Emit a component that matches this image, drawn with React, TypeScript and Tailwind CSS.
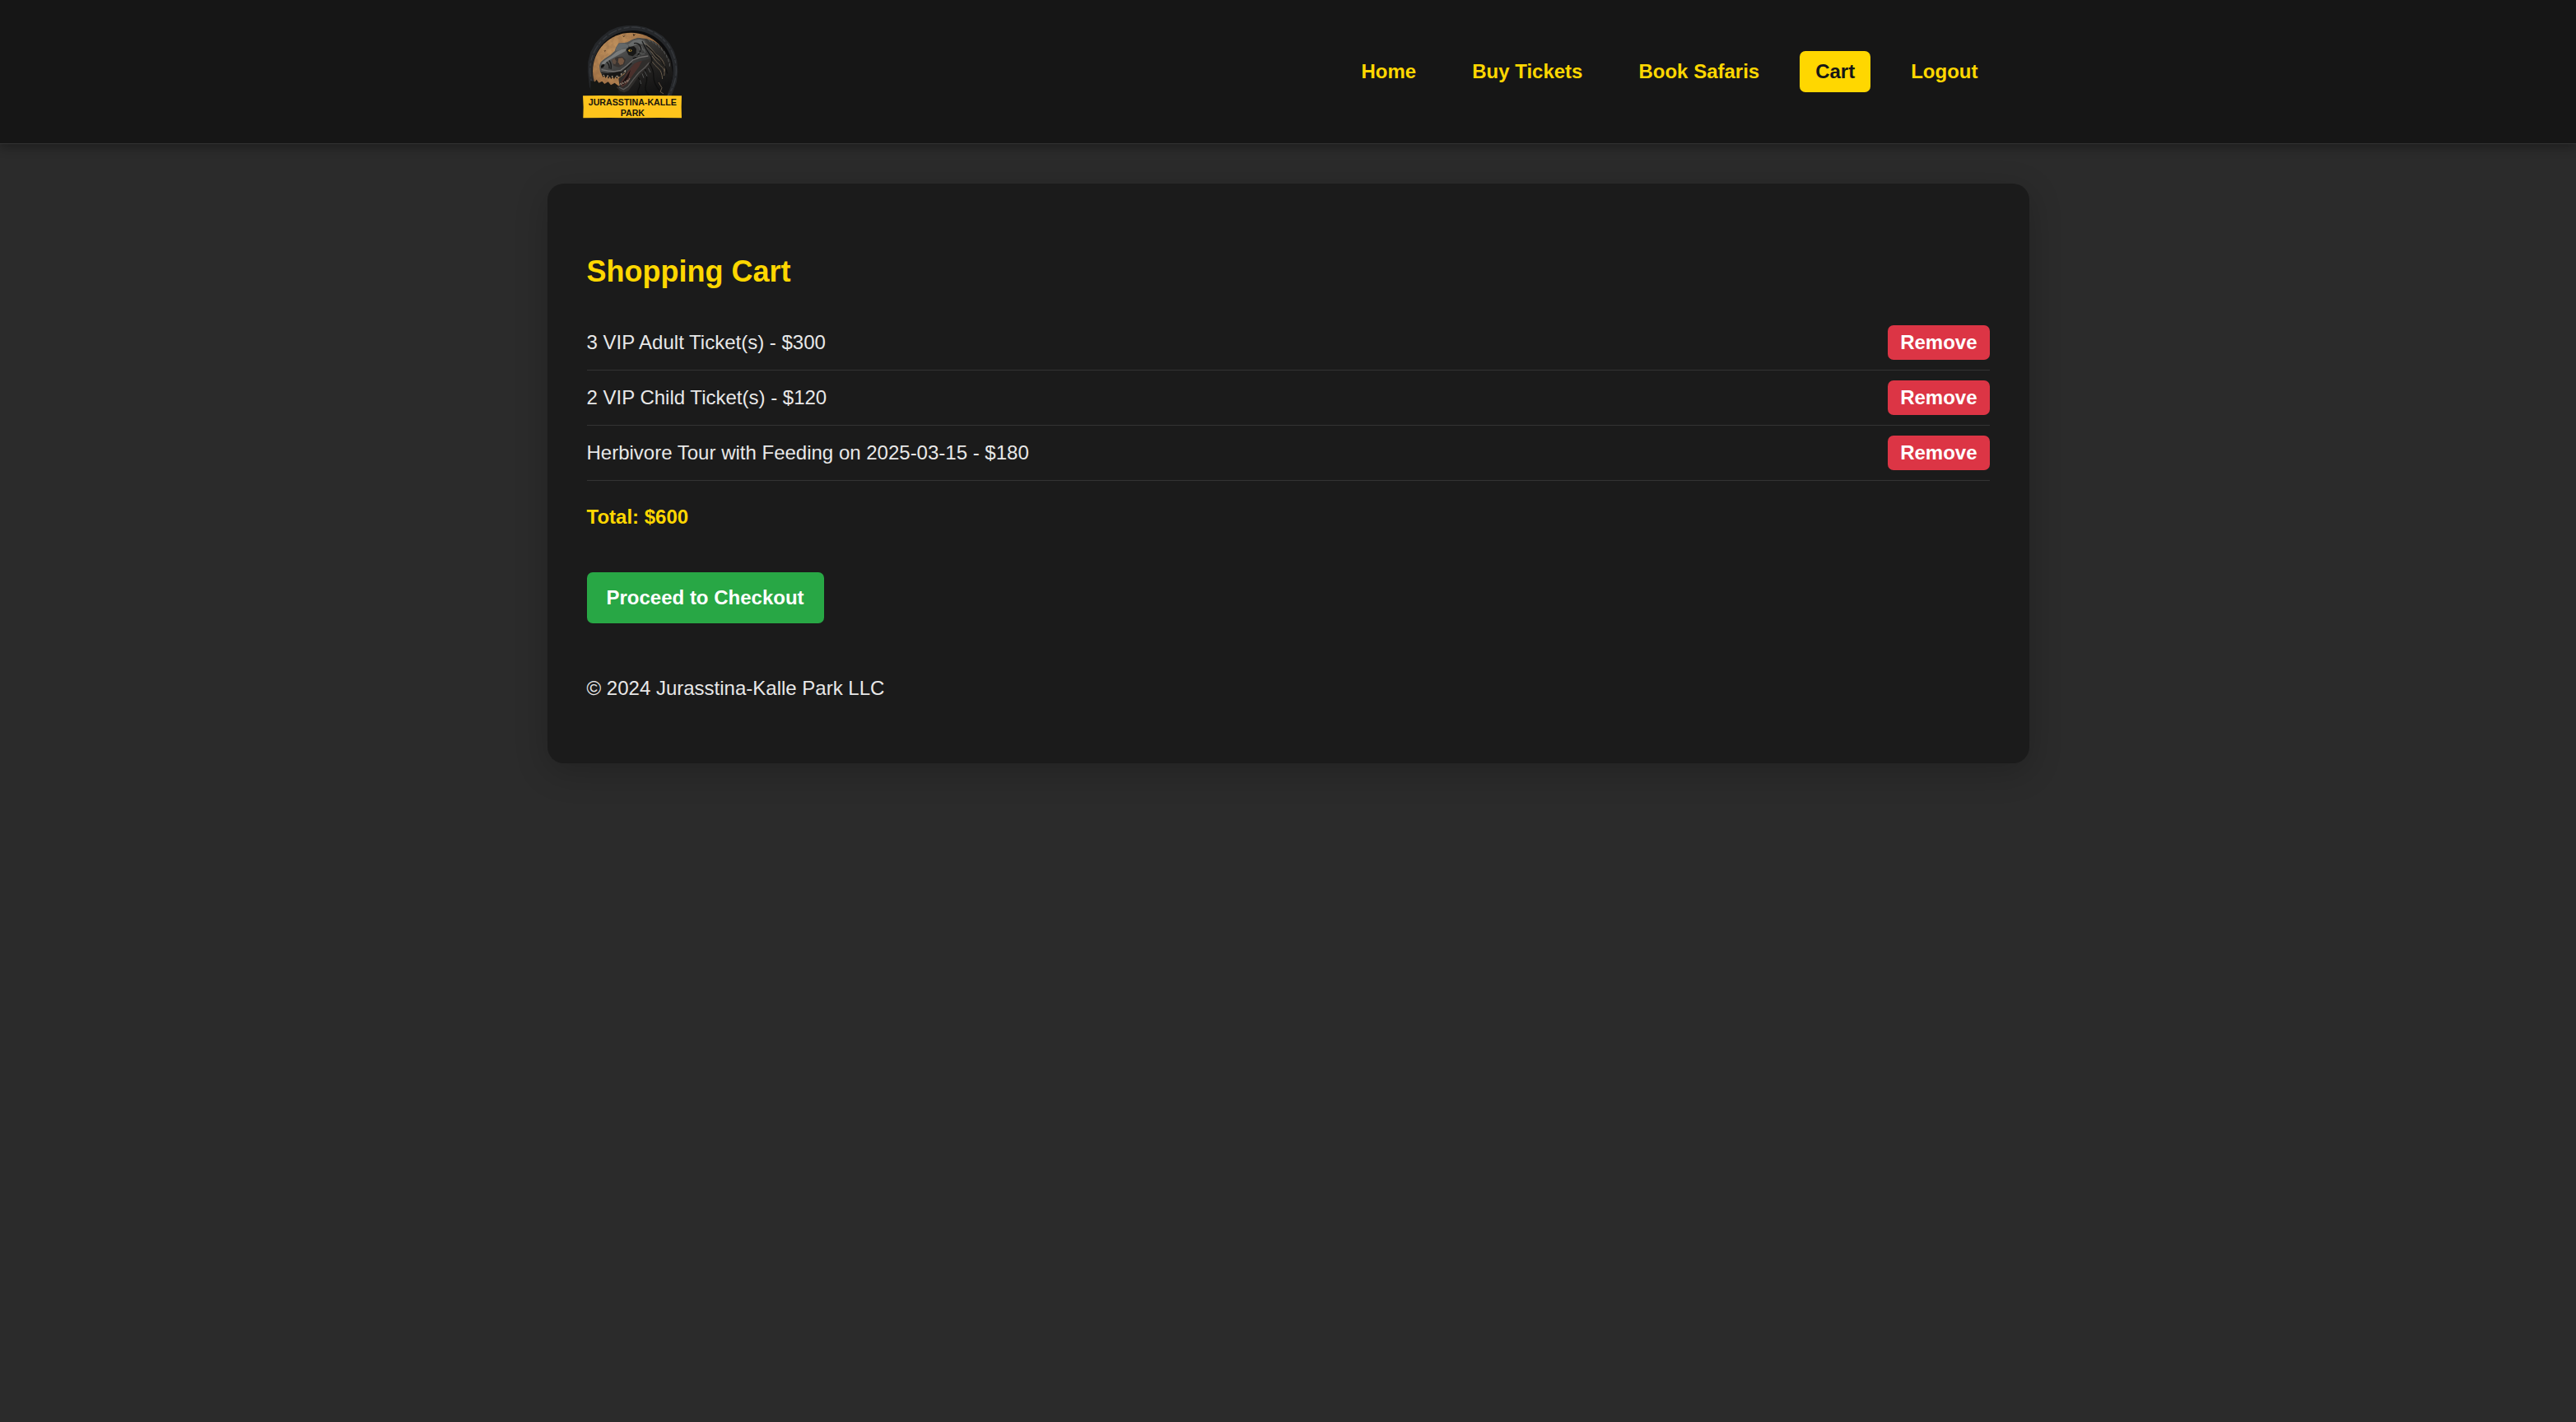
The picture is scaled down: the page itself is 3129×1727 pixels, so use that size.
import React from "react";

const navLinks = [
  { label: "Home", active: false },
  { label: "Buy Tickets", active: false },
  { label: "Book Safaris", active: false },
  { label: "Cart", active: true },
  { label: "Logout", active: false },
];

const cartItems = [
  "3 VIP Adult Ticket(s) - $300",
  "2 VIP Child Ticket(s) - $120",
  "Herbivore Tour with Feeding on 2025-03-15 - $180",
];

function ParkLogo() {
  return (
    <svg
      viewBox="54 51 360 360"
      className="size-[120px] shrink-0"
      role="img"
      aria-label="Jurasstina-Kalle Park"
    >
      <defs>
        <radialGradient id="sky" cx="0.35" cy="0.3" r="0.75">
          <stop offset="0" stopColor="#c99c66" />
          <stop offset="0.5" stopColor="#ac7c4c" />
          <stop offset="1" stopColor="#6b452b" />
        </radialGradient>
        <linearGradient id="hide" x1="0" y1="0" x2="1" y2="1">
          <stop offset="0" stopColor="#707372" />
          <stop offset="0.45" stopColor="#4a4a49" />
          <stop offset="1" stopColor="#1e1e1e" />
        </linearGradient>
        <linearGradient id="neck" x1="0" y1="0" x2="0.4" y2="1">
          <stop offset="0" stopColor="#474744" />
          <stop offset="0.5" stopColor="#2a2826" />
          <stop offset="1" stopColor="#141414" />
        </linearGradient>
        <filter id="grain" x="0" y="0" width="1" height="1">
          <feTurbulence type="fractalNoise" baseFrequency="0.06" numOctaves="3" seed="4" />
          <feColorMatrix values="0 0 0 0 0.2  0 0 0 0 0.1  0 0 0 0 0.05  1.6 0 0 0 -0.6" />
          <feComposite in2="SourceGraphic" operator="in" />
        </filter>
        <clipPath id="above">
          <rect x="54" y="51" width="360" height="270" />
        </clipPath>
      </defs>
      <g clipPath="url(#above)">
        <path
          d="M72 230L73 196L82 160L99 128L121 104L150 82L180 69L212 63L250 63L284 70L318 84L346 102L370 128L387 158L397 192L400 230L396 268L384 300L376 321H92L78 285Z"
          fill="#25272a"
        />
        <circle cx="237" cy="226" r="157" fill="none" stroke="#36393d" strokeWidth="4" strokeDasharray="21 7 34 5 12 9" />
        <circle cx="236" cy="228" r="147" fill="#0c0c0d" />
        <circle cx="230" cy="229" r="140" fill="url(#sky)" />
        <circle cx="230" cy="229" r="140" fill="#000" filter="url(#grain)" opacity="0.5" />
        <path d="M236 92l5 4 6-3-5 6-3 3zM198 99l5 3 6-2-6 5zM130 152l4 3 5-2-5 5z" fill="#2a1c12" />
        <path
          d="M82 264L98 268L104 260L112 272L124 266L133 276L146 268L156 280L170 272L190 288L205 321H82Z"
          fill="#161714"
        />
        <path
          d="M239 112L258 108L285 111L312 121L334 136L354 158L374 192L382 240L374 284L360 321H190L180 300L200 290L240 240L262 215L262 170Z"
          fill="url(#neck)"
        />
        <path
          d="M184 256L205 240L216 222L238 194L266 182L304 176L298 202L280 225L258 247L240 274L221 299L205 307L190 302L176 288L187 281Z"
          fill="#2f2d2b"
        />
        <path
          d="M190 273L207 248L220 226L244 198L270 191L258 214L236 244L214 276L196 288Z"
          fill="#4a302c"
        />
        <path d="M194 276L214 246L228 224L220 252L202 279Z" fill="#1a1010" />
        <path
          d="M114 210L119 196L134 183L154 170L170 156L176 140L185 127L204 126L216 124L235 113L256 108L279 113L292 131L304 158L304 180L286 188L260 193L241 202L222 225L205 236L190 250L168 249L145 246L126 246L117 232Z"
          fill="url(#hide)"
        />
        <path d="M121 201L136 188L158 174L176 159L196 149L216 146L208 157L188 168L166 180L145 192L130 206Z" fill="#8b8f8e" opacity="0.7" />
        <path d="M171 154L179 137L188 129L205 128L218 132L220 143L200 146L184 155Z" fill="#63686a" />
        <path d="M218 133L238 118L260 113L278 119L282 132L260 129L242 134L228 144Z" fill="#6c7070" opacity="0.85" />
        <path d="M211 151L222 141L240 138L249 148L248 164L236 175L221 171Z" fill="#171716" />
        <ellipse cx="226" cy="154" rx="6" ry="5" fill="#c49a3a" />
        <ellipse cx="227" cy="154" rx="2" ry="4" fill="#14100a" />
        <path d="M159 190L178 178L198 176L210 188L205 205L186 215L166 210Z" fill="#383330" />
        <path d="M184 182L198 181L205 191L200 204L189 207L182 196Z" fill="#745641" />
        <path d="M160 188L170 183L176 194L172 205L163 202Z" fill="#5c4b40" />
        <path d="M120 210L128 203L134 206L128 216L120 218Z" fill="#0e0e0e" />
        <path d="M122 224L144 228L168 231L192 226L214 209L236 189L262 179L292 174" fill="none" stroke="#8a8785" strokeWidth="4" opacity="0.65" />
        <path d="M121 235L145 239L170 241L191 237L211 220L232 200" fill="none" stroke="#1a1918" strokeWidth="4" />
        <path
          d="M122 240l6 12 4-7 5 10 5-9 5 11 5-9 5 11 5-10 6 10 4-10 7 8 4-12 6 6 3-12 6 3 2-9-12-2z"
          fill="#171615"
        />
        <path
          d="M127 242l3 6 3-5zM142 244l3 7 3-6zM158 246l3 6 3-6zM175 246l3 7 4-8zM191 239l4 6 2-10zM204 229l5 5 1-10z"
          fill="#b3a795"
        />
        <path d="M187 281l4-8 3 6 5-9 2 6 6-10 2 6 7-11 1 8 8-14" fill="none" stroke="#a09282" strokeWidth="2" />
        <path d="M186 288L202 296L218 286L238 259L258 235L280 216L296 198" fill="none" stroke="#686664" strokeWidth="4" opacity="0.75" />
        <g fill="none" stroke="#8a7860" strokeWidth="3" opacity="0.7">
          <path d="M278 126Q300 140 312 158T340 190" />
          <path d="M288 142Q306 160 326 172T352 210" />
          <path d="M300 154Q316 180 336 192T352 230" />
          <path d="M306 174Q320 196 338 210T350 246" />
          <path d="M304 192Q318 210 330 220T344 258" />
          <path d="M330 270L342 290L336 304L348 312" />
        </g>
        <g fill="none" stroke="#0c0c0c" strokeWidth="4" opacity="0.8">
          <path d="M270 120Q280 144 296 166T302 200" />
          <path d="M284 136Q312 160 334 186T362 238" />
          <path d="M296 200Q312 224 312 250T334 300" />
          <path d="M280 222Q292 250 284 276T296 316" />
          <path d="M256 252Q268 270 258 292T262 318" />
          <path d="M240 128Q254 124 262 136T258 166T236 182" />
          <path d="M140 196Q152 204 150 220M150 190Q160 204 156 222" />
        </g>
        <g fill="none" stroke="#6c6e6d" strokeWidth="3" opacity="0.7">
          <path d="M292 113l8 10M304 118l8 10M316 125l7 10M328 134l6 10M339 144l5 11M349 156l4 11M358 170l3 11M365 184l2 12M370 200l0 12" />
          <path d="M258 140l6 14M268 138l6 16M276 148l5 14M254 160l14 4M246 176l14-4M266 168l14-2" />
          <path d="M270 238l6 16M280 230l8 18M292 218l8 16M262 262l4 14" />
        </g>
      </g>
      <path
        d="M54 319L120 318L200 319L290 318L414 319L413 360L414 400L330 399L240 400L150 399L55 400L56 360Z"
        fill="#fec41c"
      />
      <g
        fill="#17150c"
        fontFamily="'Liberation Sans', Arial, sans-serif"
        fontWeight="700"
        fontSize="32"
        textAnchor="middle"
      >
        <text x="235" y="353">JURASSTINA-KALLE</text>
        <text x="235" y="392">PARK</text>
      </g>
    </svg>
  );
}

export default function App() {
  return (
    <div className="min-h-screen bg-[#2b2b2b] font-['Liberation_Sans',Arial,sans-serif] text-[24px] leading-[27px] text-[#e8e8e8]">
      <header className="border-b border-[#333333] bg-[#161616] shadow-[0_4px_12px_rgba(0,0,0,0.3)]">
        <div className="mx-auto flex max-w-[1800px] items-center justify-between px-[43px] py-[27px]">
          <a href="#home">
            <ParkLogo />
          </a>
          <nav className="flex items-center gap-[30px] leading-[26px] font-bold">
            {navLinks.map((link) => (
              <a
                key={link.label}
                href="#"
                aria-current={link.active ? "page" : undefined}
                className={
                  link.active
                    ? "rounded-[7px] bg-[#ffd700] px-[19px] py-3 text-[#161616]"
                    : "rounded-[7px] px-[19px] py-3 text-[#ffd700]"
                }
              >
                {link.label}
              </a>
            ))}
          </nav>
        </div>
      </header>

      <main className="mx-auto mt-12 max-w-[1800px] rounded-[20px] bg-[#1b1b1b] px-12 pt-[87px] pb-[78px] shadow-[0_10px_40px_rgba(0,0,0,0.2)]">
        <h1 className="text-[36px] leading-[40px] font-bold text-[#ffd700]">
          Shopping Cart
        </h1>
        <ul className="mt-[33px] leading-[26px]">
          {cartItems.map((item) => (
            <li
              key={item}
              className="flex items-center justify-between border-b border-[#333333] py-3"
            >
              <span>{item}</span>
              <button
                type="button"
                className="rounded-[7px] bg-[#dc3545] px-[15px] py-2 font-bold text-white"
              >
                Remove
              </button>
            </li>
          ))}
        </ul>
        <p className="mt-[30px] font-bold text-[#ffd700]">Total: $600</p>
        <button
          type="button"
          className="mt-[54px] rounded-[7px] bg-[#28a745] px-6 py-[17px] leading-[28px] font-bold text-white"
        >
          Proceed to Checkout
        </button>
        <footer className="mt-[65px]">
          <p>© 2024 Jurasstina-Kalle Park LLC</p>
        </footer>
      </main>
    </div>
  );
}
